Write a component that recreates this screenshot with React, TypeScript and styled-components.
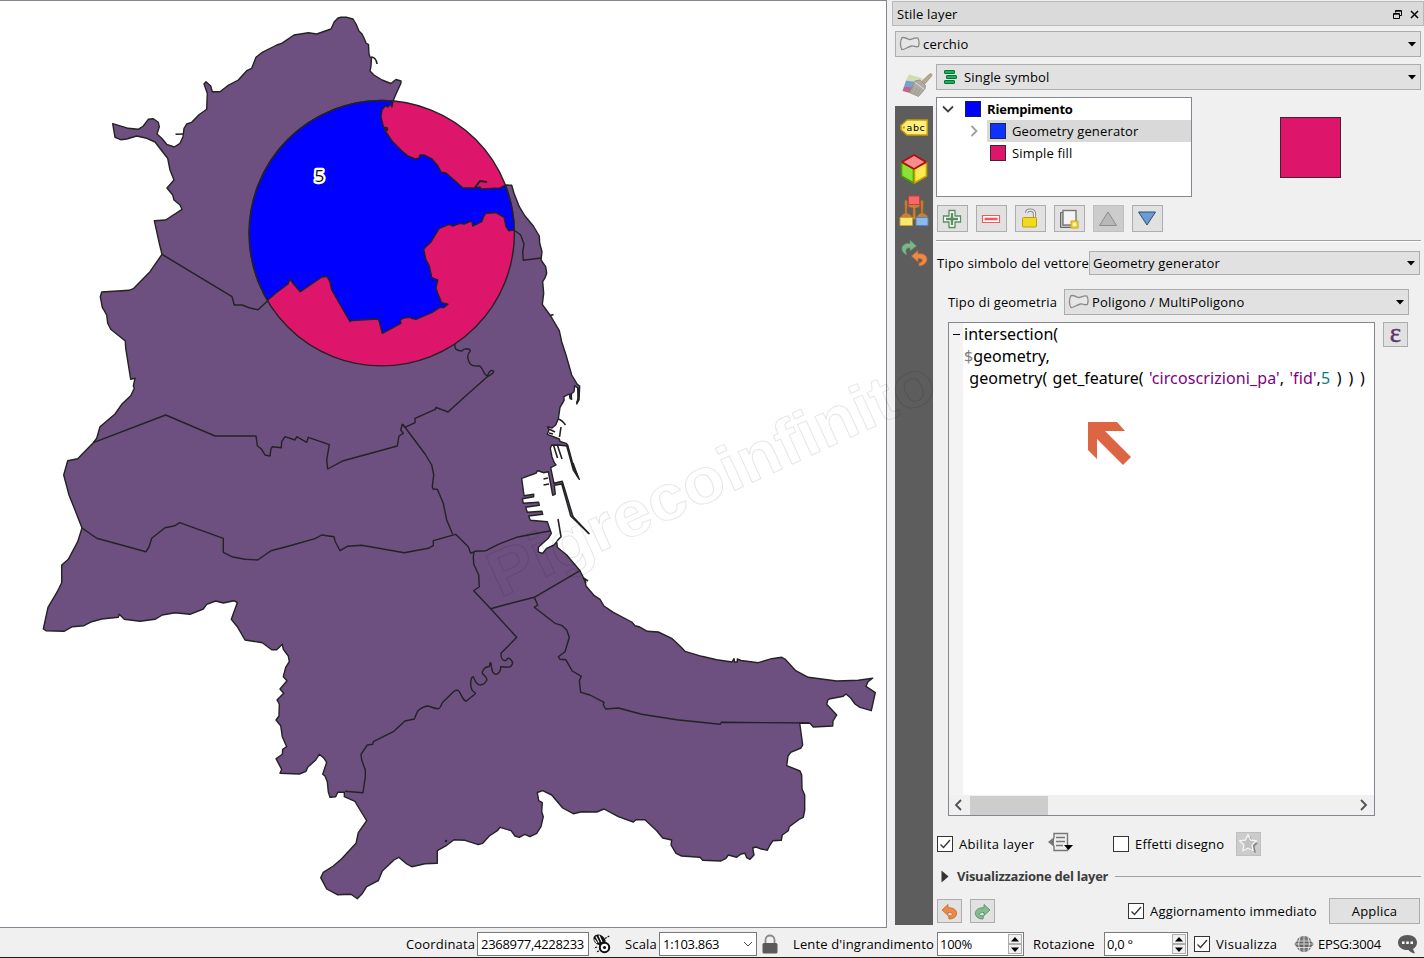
import React from 'react';
import styled, { createGlobalStyle, css } from 'styled-components';

const GlobalStyle = createGlobalStyle`
  *, *::before, *::after { box-sizing: border-box; }
  body { margin: 0; background: #f0f0f0; }
`;

const Window = styled.div`
  width: 1424px;
  height: 958px;
  overflow: hidden;
  position: relative;
  display: flex;
  flex-direction: column;
  background: #f0f0f0;
  border-bottom: 1px solid #1c1c1c;
  color: #000;
  font: 13px/18px 'Open Sans', 'Noto Sans', sans-serif;
  letter-spacing: 0.18px;
  white-space: nowrap;
`;
const Main = styled.div`
  display: flex;
  height: 928px;
  flex: none;
`;
const Canvas = styled.div`
  width: 887px;
  height: 928px;
  flex: none;
  background: #fff;
  border: 1px solid #828790;
  border-left: 0;
  overflow: hidden;
  svg { display: block; margin-top: -1px; }
`;
const Watermark = styled.svg`
  position: absolute;
  left: 0;
  top: 0;
  pointer-events: none;
`;

const Dock = styled.section`
  width: 532px;
  margin: 1px 0 0 5px;
  display: flex;
  flex-direction: column;
`;
const DockTitle = styled.header`
  height: 25px;
  border: 1px solid #b9b9b9;
  background: #dadada;
  display: flex;
  align-items: center;
  padding: 1px 4px 0 4px;
  gap: 8px;
  span { flex: 1; }
`;
const DockBody = styled.div`
  display: flex;
  margin-top: 7px;
  padding-left: 3px;
`;
const Tabs = styled.nav`
  width: 38px;
  flex: none;
  height: 861px;
  display: flex;
  flex-direction: column;
`;
const ActiveTab = styled.div`
  height: 42px;
  display: flex;
  justify-content: center;
  align-items: center;
  padding-left: 6px;
`;
const TabStrip = styled.div`
  height: 819px;
  background: #5d5d5d;
  display: flex;
  flex-direction: column;
  align-items: center;
  padding-top: 7px;
  gap: 11px;
  svg { flex: none; }
`;
const Content = styled.div`
  width: 488px;
  margin-left: 3px;
  display: flex;
  flex-direction: column;
`;
const Combo = styled.div<{ w: number; h?: number; gap?: number }>`
  width: ${p => p.w}px;
  height: ${p => p.h ?? 26}px;
  flex: none;
  border: 1px solid #adadad;
  background: #e1e1e1;
  display: flex;
  align-items: center;
  gap: ${p => p.gap ?? 3}px;
  padding: 0 4px 0 3px;
  svg { flex: none; }
  span { flex: 1; }
`;
const TopCombo = styled.div`
  margin: 5px 0 0 3px;
`;
const SymbolRow = styled.div`
  display: flex;
  margin-top: 7px;
`;
const Tree = styled.div`
  width: 256px;
  height: 100px;
  border: 1px solid #828790;
  background: #fff;
`;
const TreeRow = styled.div<{ root?: boolean }>`
  height: 22px;
  display: flex;
  align-items: center;
  font-weight: ${p => (p.root ? 700 : 400)};
  letter-spacing: ${p => (p.root ? -0.2 : 0.16)}px;
  padding-left: ${p => (p.root ? 5 : 31)}px;
  svg { width: 12px; flex: none; }
`;
const TreeItem = styled.div<{ selected?: boolean; root?: boolean }>`
  flex: 1;
  height: 22px;
  display: flex;
  align-items: center;
  gap: 6px;
  margin-left: ${p => (p.root ? 8 : 7)}px;
  padding-left: 3px;
  background: ${p => (p.selected ? '#d9d9d9' : 'transparent')};
`;
const Swatch = styled.i<{ c: string; size?: number }>`
  width: ${p => p.size ?? 16}px;
  height: ${p => p.size ?? 16}px;
  background: ${p => p.c};
  border: 1px solid rgba(35, 35, 35, 0.8);
`;
const Preview = styled.div`
  margin: 20px 0 0 88px;
`;
const Tools = styled.div<{ gap: number; mt: number }>`
  display: flex;
  gap: ${p => p.gap}px;
  margin: ${p => p.mt}px 0 0 1px;
`;
const buttonBase = css`
  border: 1px solid #adadad;
  background: #e1e1e1;
  display: flex;
  align-items: center;
  justify-content: center;
  padding: 0;
  font: inherit;
  letter-spacing: inherit;
  color: inherit;
  flex: none;
`;
const ToolButton = styled.button<{ w?: number; h?: number; off?: boolean }>`
  ${buttonBase}
  width: ${p => p.w ?? 31}px;
  height: ${p => p.h ?? 27}px;
  padding-right: 1px;
  ${p => p.off && 'background:#ccc;border-color:#bfbfbf;'}
`;
const Rule = styled.div`
  height: 2px;
  margin: 8px 3px 0 0;
  background: #a0a0a0;
  border-bottom: 1px solid #fff;
`;
const Field = styled.div<{ mt: number; ml: number }>`
  display: flex;
  align-items: center;
  margin: ${p => p.mt}px 0 0 ${p => p.ml}px;
`;
const Caption = styled.label<{ w: number; ls?: number }>`
  width: ${p => p.w}px;
  flex: none;
  letter-spacing: ${p => p.ls ?? 0.18}px;
`;
const EditorRow = styled.div`
  display: flex;
  align-items: flex-start;
  gap: 8px;
  margin: 7px 0 0 12px;
`;
const Editor = styled.div`
  width: 427px;
  height: 494px;
  border: 1px solid #828790;
  background: #fff;
  display: flex;
  flex-direction: column;
`;
const CodeArea = styled.div`
  flex: 1;
  display: flex;
`;
const Gutter = styled.div`
  width: 14px;
  background: #f3f3f3;
  padding: 11px 0 0 4px;
  &::before { content: ''; display: block; width: 7px; height: 1px; background: #000; }
`;
const Code = styled.pre`
  margin: 0;
  padding: 0 0 0 1px;
  font: 16px/22px 'Noto Sans', sans-serif;
  letter-spacing: 0;
  word-spacing: 1.2px;
`;
const Tok = styled.span<{ c: string; ls?: number; ws?: number }>`
  color: ${p => p.c};
  letter-spacing: ${p => p.ls ?? 0}px;
  word-spacing: ${p => p.ws ?? 1.2}px;
`;
const Scroll = styled.div`
  height: 20px;
  background: #f0f0f0;
  display: flex;
  align-items: center;
  justify-content: space-between;
  padding: 0 6px 0 5px;
`;
const Thumb = styled.div`
  width: 78px;
  height: 19px;
  background: #cdcdcd;
  margin: 0 auto 0 6px;
`;
const EpsButton = styled.button`
  ${buttonBase}
  width: 25px;
  height: 25px;
  padding-bottom: 3px;
  font: 27px/20px 'Liberation Serif', serif;
  -webkit-text-stroke: 0.4px #5c3566;
  color: #5c3566;
`;
const OptionRow = styled.div`
  display: flex;
  align-items: center;
  height: 25px;
  margin: 15px 0 0 1px;
`;
const Check = styled.span<{ mr?: number }>`
  width: 16px;
  height: 16px;
  flex: none;
  border: 1px solid #333;
  background: #fff;
  margin-right: ${p => p.mr ?? 6}px;
  svg { display: block; }
`;
const Group = styled.div`
  display: flex;
  align-items: center;
  height: 20px;
  margin: 10px 3px 0 5px;
  font-weight: 700;
  letter-spacing: -0.26px;
  color: #3c3c3c;
  svg { margin-right: 8px; }
  &::after { content: ''; flex: 1; height: 1px; background: #a0a0a0; margin-left: 7px; }
`;
const Footer = styled.div`
  display: flex;
  align-items: center;
  height: 26px;
  margin: 12px 0 0 1px;
`;
const Apply = styled.button`
  ${buttonBase}
  width: 91px;
  height: 26px;
`;

const StatusBar = styled.footer`
  height: 29px;
  display: flex;
  align-items: center;
  padding: 3px 0 0 406px;
`;
const Input = styled.div<{ w: number; mr: number; spin?: boolean }>`
  width: ${p => p.w}px;
  height: 24px;
  flex: none;
  border: 1px solid #7a7a7a;
  background: #fff;
  display: flex;
  align-items: center;
  justify-content: space-between;
  letter-spacing: ${p => (p.spin ? -0.3 : -0.3)}px;
  padding: ${p => (p.spin ? '0 1px 0 2px' : '0 3px')};
  margin-right: ${p => p.mr}px;
`;
const Spin = styled.div`
  display: flex;
  flex-direction: column;
  width: 14px;
  i {
    height: 10px;
    border: 1px solid #adadad;
    background: #f0f0f0;
    display: flex;
    align-items: center;
    justify-content: center;
  }
`;
const StatusIcon = styled.span<{ w: number }>`
  width: ${p => p.w}px;
  flex: none;
  display: flex;
`;

const LAND =
  'M338,18L341,17.3 347,17.3 353,19 356,24 359,31 362,34 364,38 366,43 368.5,44.5 369,54 370,57 371.5,58 371,66 370,71 374,75 382,80 391,83.5 394,81 396,79.5 401,81 401,83 396,94 393,101 392,107 391,104 388,107 385,106 382,110 381,117 383,125 386,132 392,141 402,151 408,156 415,159 419,158 420,155 424,155 432,159 438,166 441,172 446,173 453,179 463,188 475,188 480,187 481,189 500,188 506.7,185 511.7,185.3 514,193.3 519.3,206.7 525,216 533.3,226 539.3,236 539.7,243.3 542,251.7 541,260 545.7,266.7 546.7,273.3 545,278 542.7,281.7 543.7,293.3 542.3,304.3 550.7,316 559.3,330.7 561.7,341.7 566,355 571.7,375 577.3,384.3 579.7,386 579,400 576.7,404 578,398 577.7,388 574.7,385.7 574,391.7 571,394 571.7,399.3 570,398.3 569.3,394 564,396.7 564,400.7 560,407.3 558.3,419 555.7,425 552,428 547.7,426.7 549,430 547.3,434.3 559.3,439 560,441.3 566,443.3 567.7,445 573.3,465.7 579.3,479.3 573.3,470 566.7,446 560.7,445.3 551.7,445 550.3,448.3 552,457 554.3,462.7 556,465 550.7,467.7 554,483.3 562.3,481.3 572.3,514.3 573.3,517.3 589,533.7 570.7,516 561.7,484 554.3,485.3 555.3,494 552.7,495.3 548.3,471.7 543.3,472.7 539,471 537.3,470.7 536.3,473 521.7,478.3 524,495.7 533.7,494.3 533.7,496.7 522.3,498.7 523.3,503.3 538.7,502.3 539.3,505.3 525.7,507.3 527.3,512.3 542,511.3 542.7,514.3 528.7,516 530.3,520.3 547.3,521.7 551.3,533.3 548.3,538.3 538.3,547.3 538.3,552 542.7,553.3 546.7,548.3 554,545 556.7,541.7 557.3,547.3 566.7,555 580,570.7 585,580.7 586,586 594.3,595.7 600,599.3 604,606 613.3,612.3 631.7,622 635,625.7 639,626.7 647.3,631.3 658.3,632 671.7,638.3 680.7,646.7 685,651.3 701.7,656.3 716.7,659.7 732,662 734,658.7 734.5,662 737.3,662 737.3,659 741,660.5 758.3,662.7 771.7,658.7 781.7,657.3 785,659 795.7,670.7 808.3,677.3 836.7,681 858.3,680.3 872.7,678.3 868,681.7 866,686.3 875.3,692.7 871.3,710.7 860,707.3 855,704 850.7,698 846,694 843.3,696.3 829,699 827.7,700.3 826.7,704.3 836.7,715 833,721 832.7,726 813.3,727 810,723.3 799.7,723 802.7,745 801,748 790.7,752.3 788,756 786.7,765.7 800,771 801.7,775 802,789 804.7,795 804.7,810 803.3,817.3 799,819.5 789.3,826.7 788.3,830.7 782.3,835 781.3,840.3 773,840.7 770,845 767.3,850.3 760,848.7 756,847 752.7,848 754,855 750,859.3 746.7,857.7 745,853.3 741,854 736.7,857.3 728.3,855 726,858.3 721,861 702.7,860.3 700,857.3 681.7,856 676,853.3 671,845 671.7,840 662.7,838 656.7,830.7 645,819.7 636,819.7 633.3,822 618.3,816.7 604,809 596.7,812 581.7,811.7 573.3,813.7 562.7,808 551.7,795 542.7,790.7 537.3,792.5 538.7,800.7 542.3,802.7 541.7,811.7 543.3,816.7 541,826.7 536.7,833.3 530,836.7 524.7,834.3 519.3,837.3 515,836 511,830.7 500,827.3 497.3,830.7 489.3,836 482.7,843.3 478.3,844.7 465,840.3 454,839.7 446.7,845.3 437.3,850.7 437.3,863.3 425,863.7 411.7,866.7 406.7,864 398.7,857.3 394,860 382.3,871 378.3,880.7 366.7,886.7 361.7,894.3 357.3,898.7 351,894.3 337.3,894.7 326.7,889 320.7,877.7 323.3,872.3 333.3,866 341.7,858.7 356,843.3 358.3,832.7 366.7,820.7 360.7,811 355,801.3 344.3,796.7 344.3,792.3 337.7,792.3 335.7,796.7 330,797.3 328.3,791.7 327.3,781.7 325,776 322.7,774.3 326.7,762.3 324,758.3 319.3,754.3 315.7,760 307.7,767.3 306,771.3 299.3,774 280,773.3 281.7,769.3 276,758.7 282.3,754.3 282.7,749.3 286.7,746.7 282.3,736.7 280.7,725.7 276,720 279,716 279.3,704 277,700 283.7,693.3 280,689 287,680.7 283.3,676.7 285.7,667.3 289.3,661.7 288.3,656 283.3,649.3 282.3,644.3 276.7,649.7 271.7,649.7 262.3,642.7 245,640 237.3,626.7 231.3,619.3 237.3,602.7 234,600.7 223.3,603 215.7,601 206.7,604.3 203.3,609 190,614.3 175,612.7 162.3,615 155,619.3 140,621.3 124.3,619.3 119.3,614.3 118.3,617.3 101.7,619 91.7,621.7 84,625.7 72.3,626.7 64,631.3 46,630.7 43.3,629 48,607.3 57.3,591.7 61.7,582.7 61.7,565 68.3,559.3 77.7,541.7 82,528 75,510 69,495 63.7,475 67.7,460.7 77.7,458.7 93.3,442.7 96.7,438.3 100,426.7 115,414 121.7,404.3 130.7,395.7 134.3,388.3 133.3,386 135,378.3 130.7,379.3 125.7,348.3 125.3,341 110.7,329.3 107.7,323.3 106.7,315 102.3,307.3 100.3,296.7 101.7,292 129,290.3 133.3,288.7 150,271.7 162,254.3 159.3,243.3 154.3,220.7 165.7,220 182,209.3 180,205 174,200 172.7,195 167,188 174,180 170,170 167.7,158.3 163.3,152.7 155,142 146.7,138.3 136.7,136 126.7,139 120.7,139.7 115,137.3 112.7,123.7 128.3,128.3 138.3,129.3 143.3,126 148.3,119.3 153.3,118.7 158.3,122.3 159.3,126.7 157,134 161.7,138.3 166.7,144.3 174.3,147 180,143.3 183,136.7 184,128.3 186.7,124 191.7,122.3 199,114.7 206.7,109.3 207.3,93.3 204,84 206,81.7 210.7,86 212.3,91.7 220,91.7 227.7,85.7 238.3,80 246.7,70.7 251.7,68.3 256,57.3 261.7,52.7 276.7,45 281.7,43.3 294,35 308.3,32.7 316.7,34 331,29 334.3,21.7Z';

const BORDERS = [
  'M162,254.3L232,296.7 234.3,305 242,305 250,308 258,309.7 267.5,301',
  'M515,230.7L520.7,235 524,244 522.7,251.7 523.3,260.3 541.3,258',
  'M455,344C454,349 457,351 461.7,351 464,348 470,348 470.3,351 467,354 467,357 469,361.7 470,365 472,366 480,366 483,368 483,374 487.3,376 489,371 492,369 493.7,371.5 493.500,374 490,374.500 487,377L466.7,395 448,412 436,407.3 435.3,409.3 415,418.3 415,422.7 405,427.3 402.3,424.3 400.7,430 403.3,433.3 399,436 397.3,446 343.3,460.7 327.7,469 326.7,460 329.3,444.7 308.3,437.3 306.7,442.3 296.7,436.7 295,440 285,436.7 281.7,441.7 281.3,447.7 272.3,446.7 271,449 270,456 265,455 261.7,449.3 257.3,445.7 256,436 215,436 165.7,415 93.3,442.7',
  'M403,424.5L425,454 431.7,465 433.7,475 432.3,486.7 433,489 437.3,489.3 443.3,503.3 446.7,520 452.7,534.3',
  'M82,528L96.7,538.3 146,551.7 149,547 151.7,538.3 165,527.7 175,525.7 179.7,522.7 223.3,538.3 223.3,552.3 231.7,556.7 245,559.3 257.7,560 271,550.7 291.7,545.3 315,538.7 321.7,535 334,536.7 335,541 340,550.7 347.3,546.3 361.7,545.3 404.3,552.7 428.3,548.3 433.3,545.7 433.3,540.7 455.7,534.3 468.3,546.7 470.7,553.3 475,551.3 486,550.7 498.3,544.3 516.7,537.3 533.3,534 550.7,530.7',
  'M474,551.5L473.3,556.7 473.7,564 478.7,575 479.3,586.7 473.7,590.7 490.7,608.7 516.7,637.3 501,653.3C501,660 503,660.500 505,660.7 507,660.500 507,657.500 509.3,658.3 512,660 513,663 512.3,664 511,668 508,667.500 500.7,666.7 501,670 499,674 496,674.300 491,674 492,667 490.7,662.7 489.3,662.500 490,666 489.3,666.500 484,666.500 482,672 482.3,673.3 485,676 487,678 487,680 484,685 481,685.500 478.500,684.700 474,682 474.500,678 473.3,676.7 470,677 470,688 472.7,691 475.500,692.500 476,693.500 474.500,694.500L466,701.3C461,699 460.500,690 457.500,690.300 456,690 455,690.500 454,691.3L442.3,702.7C441,706 440,708.700 438.3,708.7 433,708.700 431,706 426.7,706 421,708 417,711 416.7,713.3L414.3,719 405,721 393.3,731.7 373.3,741.7 372.7,744.3 367.3,745 361,754.3 361.7,760 365.3,770 365.3,777 363,792.7 345,791.3',
  'M490.7,608.7L503.3,605.3 534.3,597.3 580,570.7',
  'M534.3,597.3L537.7,605 534.3,607.3 555,623.3 561.7,625.3 566.7,630 569.3,637.3 565,651.7 558.3,656.7 560,659.3 565.7,659.7 572.3,671 581.3,676.3 579.3,680.7 580.7,692.3 590,695 604,702.3 603.3,705 605.7,709 618.3,708 641.7,714.3 676.7,719.7 720,724.3 721.3,722.3 809,723',
];

const JETTIES =
  'M371,57Q376,57 377,64M175.5,134.3L183,134M586,583L583.5,578 588,581M558,519L561,536.7 557,541M573,517L589,533.7M558.3,419Q562,420 565.5,425M561,427L559.5,437M549,429L555,432M549,433L553,434M553.5,445L557.5,458M557,444L562,459M543.5,485L549,484M543.5,479L548,478M578.5,388L578.5,399 576.7,403M571.5,394L571,399M550.5,315.5L553.5,314.5M573,463L578,477';

const BLUE =
  'M267.5,300.3L276,293 288,284 290,279 293.5,284 300.3,291.7 322,277 327,276.5 330,282 331.7,290 350,321.7 352,320.5 377.3,319 379,320.5 382.3,333.3 401,323.3 400.3,320 404,318 410,317.3 412,318.5 416,319.3 431.7,312.7 440,307.3 444,307.5 448,304.3 445,303.5 441.7,302.7 437.7,293.3 436,288 437.7,280 435,279 431.7,277.3 429.3,266 425.7,259 423.7,249 430.7,242.3 439.3,228.3 449.3,224.3 452.7,226 460,223.3 464,224 470,221.5 472,221.5 472.7,226 481.7,221.7 484,216 486,213.3 496,212.7 504,217.3 506,226.7 508.7,230.7 514.4,230A132.7,132.7 0 0 0 505.3,185.5L500,188 481,189 480,187 475,188 463,188 453,179 446,173 441,172 438,166 432,159 424,155 420,155 419,158 415,159 408,156 402,151 392,141 386,132 383,125 381,117 382,110 385,106 388,107 391,104 392,107 393,101A132.7,132.7 0 0 0 267.5,300.3Z';

function MapDrawing() {
  return (
    <svg width="886" height="928" viewBox="0 0 886 928" stroke="#232323" strokeWidth="1.4" strokeLinejoin="round" fill="none">
      <path d={LAND} fill="#6d4f80" />
      {BORDERS.map((d, i) => (
        <path key={i} d={d} />
      ))}
      <path d={JETTIES} strokeWidth="1.6" />
      <circle cx="446" cy="841" r="0.6" />
      <circle cx="381.7" cy="233.2" r="132.7" fill="#de166b" />
      <path d={BLUE} fill="#0000ff" />
      <path d="M475,187.500L480,181 487,182" strokeWidth="2" />
      <circle cx="386" cy="129" r="1.600" fill="#232323" />
      <text x="319.500" y="182" textAnchor="middle" fontFamily="'Open Sans'" fontSize="17" fill="#111" stroke="#fff" strokeWidth="4.500" paintOrder="stroke">
        5
      </text>
    </svg>
  );
}

const Drop = () => (
  <svg width="8" height="5" viewBox="0 0 8 5">
    <path d="M0 0H8L4 4.5Z" fill="#000" />
  </svg>
);
const PolygonIcon = () => (
  <svg width="21" height="16" viewBox="0 0 21 16">
    <path d="M3 1.600C7 .8 9 4.200 12 3.400 14 2.400 17 1.200 19 2.200 20.400 5 20.200 8 19.400 10.500 17 11.500 15 9.700 12.500 10 8.500 10.800 6 13.600 3 13.600 1 11 .9 5 3 1.600Z" fill="#e6e6e6" stroke="#8a8a8a" strokeWidth="1.300" />
  </svg>
);
const Mark = () => (
  <svg width="14" height="14" viewBox="0 0 14 14">
    <path d="M2.500 7.500L5.500 10.500L12 3" fill="none" stroke="#333" strokeWidth="1.300" />
  </svg>
);
const Bend = ({ c, e, flip }: { c: string; e: string; flip?: boolean }) => (
  <svg width="17" height="17" viewBox="0 0 17 17">
    <path
      transform={flip ? 'matrix(-1 0 0 1 17 0)' : undefined}
      d="M1 7L7 1.500V4.800C12.500 4.500 16 7 15.600 11 15 14.500 12 16 8 16L7.500 12.800C10.500 13 11.800 12 11.300 10.800 10.800 9.600 9.500 9.400 7 9.500V12.500Z"
      fill={c}
      stroke={e}
      strokeWidth="0.800"
    />
  </svg>
);

const BrushIcon = () => (
  <svg width="32" height="28" viewBox="0 0 32 28">
    <path d="M8 3.500L22 7.500L19 12L5 9.500Z" fill="#d2dcae" />
    <path d="M5 9.500L19 11.500L15 18L3 15.500Z" fill="#76a2cf" />
    <path d="M3 15.500L16 17L13 23L1.500 20Z" fill="#bf6588" />
    <path d="M20.500 10.500L28 3.500Q30.500 1.500 31 3.500Q31.300 5 29.500 6.500L23.500 13.500Z" fill="#b3a98e" stroke="#938b74" strokeWidth=".6" />
    <path d="M14 10L19 9L24.500 14.500L24 18L17.500 25.500L8.500 21.500Z" fill="#b0aca3" stroke="#8f8b82" strokeWidth=".8" />
    <path d="M13.500 11L23.500 18.500" stroke="#dcd9d0" strokeWidth="1" />
    <path d="M13 15L10.500 21M16 16.500L13 23M19 18L15.500 24.500" stroke="#96928a" strokeWidth=".7" />
  </svg>
);
const AbcIcon = () => (
  <svg width="30" height="30" viewBox="0 0 30 30">
    <path d="M8 7H28.300V22H8L2 16.500V12.500Z" fill="#fff07c" stroke="#c89b07" strokeWidth="1.600" strokeLinejoin="round" />
    <circle cx="4.800" cy="14.500" r="1.200" fill="#c89b07" />
    <text x="7.500" y="18" fontFamily="'DejaVu Sans'" fontSize="9.500" fill="#000" textLength="18.500">abc</text>
  </svg>
);
const CubeIcon = () => (
  <svg width="30" height="30" viewBox="0 0 30 30" strokeLinejoin="round" strokeWidth="1.600">
    <path d="M2.500 8.500L14.500 14.500V29L2.500 22Z" fill="#8ae234" stroke="#4e9a06" />
    <path d="M27.500 8.500L15.500 14.500V29L27.500 22Z" fill="#fce94f" stroke="#c4a000" />
    <path d="M15 1L27 8L15 15L3 8Z" fill="#f58d8d" stroke="#b50a12" />
  </svg>
);
const BrushesIcon = () => (
  <svg width="30" height="32" viewBox="0 0 30 32">
    <path d="M5.500 6Q7 4 8.500 6L8 18Q12.500 19 13 22.500H1.500Q2 19 6 18Z" fill="#c4813a" stroke="#8f5a1e" strokeWidth=".6" />
    <path d="M21.500 6Q23 4 24.500 6L24 18Q28.500 19 29 22.500H17.500Q18 19 22 18Z" fill="#c4813a" stroke="#8f5a1e" strokeWidth=".6" />
    <path d="M9 9.500H21Q21 13 16.500 13L17 24Q15 26 13.500 24L14 13Q9 13 9 9.500Z" fill="#c4813a" stroke="#8f5a1e" strokeWidth=".6" />
    <path d="M9.500 1H20.500V9.500H9.500Z" fill="#f26a6a" stroke="#cc3a3a" />
    <path d="M1 22.500H13.500V30.500H1Z" fill="#fbe577" stroke="#c9a227" />
    <path d="M17 22.500H29V30.500H17Z" fill="#8db9ea" stroke="#5484bd" />
  </svg>
);
const HistoryIcon = () => (
  <svg width="30" height="30" viewBox="0 0 30 30">
    <path d="M8 17C2 15 1 8 6 6 8 5 10 5 11 5.500V2L17.500 8L11 13V10C7 9.500 6 12 8 17Z" fill="#7db58b" stroke="#4f8e60" strokeWidth=".7" />
    <path d="M20 28C29 27 30 19 25 16.500 23 15.500 21 15.500 19 16V12.500L12.500 18L19 24V20.500C24 20 25 24 20 25Z" fill="#ea8a46" stroke="#c9642a" strokeWidth=".7" />
  </svg>
);

function Toolbar() {
  return (
    <Tools gap={8} mt={8}>
      <ToolButton>
        <svg width="20" height="20" viewBox="0 0 20 20">
          <path d="M7 1.500H13V7H18.500V13H13V18.500H7V13H1.500V7H7Z" fill="#fff" stroke="#5a8f62" strokeWidth="1.300" />
          <path d="M10 4V16M4 10H16" stroke="#5a8f62" strokeWidth="2.400" />
        </svg>
      </ToolButton>
      <ToolButton>
        <svg width="20" height="20" viewBox="0 0 20 20">
          <path d="M1.500 6.500H18.500V13.500H1.500Z" fill="#fff" stroke="#ee5a5c" strokeWidth="1.200" />
          <path d="M3.500 10H16.500" stroke="#ee5a5c" strokeWidth="2.600" />
        </svg>
      </ToolButton>
      <ToolButton>
        <svg width="18" height="21" viewBox="0 0 18 21">
          <path d="M5.500 5C6 1.200 13.500 1 13.500 6V10" fill="none" stroke="#888" strokeWidth="3.200" />
          <path d="M5.500 5C6 1.200 13.500 1 13.500 6V10" fill="none" stroke="#eee" strokeWidth="1.300" />
          <rect x="1.500" y="9.500" width="14" height="9.500" rx="1" fill="#f0d91e" stroke="#bfa000" />
        </svg>
      </ToolButton>
      <ToolButton>
        <svg width="20" height="20" viewBox="0 0 20 20">
          <path d="M4 3.500H1.500V18.500H14V16" fill="#bbb" stroke="#666" />
          <rect x="4" y="1.500" width="13" height="14.500" fill="#f4f4f4" stroke="#777" strokeWidth="1.400" />
          <path d="M12 12H19V19H12Z" fill="#f2d544" stroke="#cda70f" />
          <circle cx="15.500" cy="15.500" r="1.800" fill="#fff8c8" />
        </svg>
      </ToolButton>
      <ToolButton off>
        <svg width="20" height="18" viewBox="0 0 20 18">
          <path d="M10 2L18.500 15.500H1.500Z" fill="#b8b8b8" stroke="#8c8c8c" />
        </svg>
      </ToolButton>
      <ToolButton>
        <svg width="20" height="18" viewBox="0 0 20 18">
          <path d="M1.500 2H18.500L10 15Z" fill="#6c9bd0" stroke="#2c4f78" />
        </svg>
      </ToolButton>
    </Tools>
  );
}

function StylePanel() {
  return (
    <Dock>
      <DockTitle>
        <span>Stile layer</span>
        <svg width="9" height="9" viewBox="0 0 9 9" fill="none" stroke="#000">
          <path d="M2.500 2.500V.5H8.500V5.500H6.500M2.500 1.200H8.500" />
          <path d="M.5 3.500H6.500V8.500H.5ZM.5 4.200H6.500" />
        </svg>
        <svg width="9" height="9" viewBox="0 0 9 9">
          <path d="M1 1L8 8M8 1L1 8" stroke="#000" strokeWidth="1.500" />
        </svg>
      </DockTitle>
      <TopCombo>
        <Combo w={526}>
          <PolygonIcon />
          <span>cerchio</span>
          <Drop />
        </Combo>
      </TopCombo>
      <DockBody>
        <Tabs>
          <ActiveTab><BrushIcon /></ActiveTab>
          <TabStrip>
            <AbcIcon />
            <CubeIcon />
            <BrushesIcon />
            <HistoryIcon />
          </TabStrip>
        </Tabs>
        <Content>
          <Combo w={485} gap={5}>
            <svg width="19" height="16" viewBox="0 0 19 16" fill="#17b05e" stroke="#0a7038">
              <rect x="4.500" y="1.500" width="10" height="3" rx=".5" />
              <rect x="6.500" y="6.500" width="10" height="3" rx=".5" />
              <rect x="4.500" y="11.500" width="10" height="3" rx=".5" />
            </svg>
            <span>Single symbol</span>
            <Drop />
          </Combo>
          <SymbolRow>
            <Tree>
              <TreeRow root>
                <svg height="12" viewBox="0 0 12 12"><path d="M1 3.500L6 8.500L11 3.500" fill="none" stroke="#404040" strokeWidth="1.800" /></svg>
                <TreeItem root><Swatch c="#0000ff" />Riempimento</TreeItem>
              </TreeRow>
              <TreeRow>
                <svg height="12" viewBox="0 0 12 12"><path d="M3.500 1L8.500 6L3.500 11" fill="none" stroke="#a0a0a0" strokeWidth="1.800" /></svg>
                <TreeItem selected><Swatch c="#0f33ff" />Geometry generator</TreeItem>
              </TreeRow>
              <TreeRow>
                <svg height="12" viewBox="0 0 12 12" />
                <TreeItem><Swatch c="#de166b" />Simple fill</TreeItem>
              </TreeRow>
            </Tree>
            <Preview><Swatch as="div" c="#de166b" size={61} /></Preview>
          </SymbolRow>
          <Toolbar />
          <Rule />
          <Field mt={9} ml={1}>
            <Caption w={152} ls={0.22}>Tipo simbolo del vettore</Caption>
            <Combo w={331} h={24}><span>Geometry generator</span><Drop /></Combo>
          </Field>
          <Field mt={14} ml={12}>
            <Caption w={116}>Tipo di geometria</Caption>
            <Combo w={345}><PolygonIcon /><span>Poligono / MultiPoligono</span><Drop /></Combo>
          </Field>
          <EditorRow>
            <Editor>
              <CodeArea>
                <Gutter />
                <Code>
                  {'intersection(\n'}
                  <Tok c="#808080">$</Tok>
                  {'geometry,\n geometry( get_feature( '}
                  <Tok c="#7f007f" ls={0.1}>'circoscrizioni_pa'</Tok>
                  {', '}
                  <Tok c="#7f007f" ls={0.1}>'fid'</Tok>,<Tok c="#007f7f">5</Tok>
                  <Tok c="#000" ws={2.6}>{' ) ) )'}</Tok>
                </Code>
              </CodeArea>
              <Scroll>
                <svg width="10" height="12" viewBox="0 0 10 12"><path d="M7 1L2 6L7 11" fill="none" stroke="#505050" strokeWidth="1.800" /></svg>
                <Thumb />
                <svg width="10" height="12" viewBox="0 0 10 12"><path d="M3 1L8 6L3 11" fill="none" stroke="#505050" strokeWidth="1.800" /></svg>
              </Scroll>
            </Editor>
            <EpsButton>ε</EpsButton>
          </EditorRow>
          <OptionRow>
            <Check><Mark /></Check>
            <Caption w={89} ls={0.35}>Abilita layer</Caption>
            <Caption w={65}>
              <svg width="26" height="20" viewBox="0 0 26 20">
                <path d="M6 1.500H19.500V18.500H6V14L1 10L6 6Z" fill="#eee" stroke="#777" strokeWidth="1.400" />
                <path d="M6 6V14L1 10Z" fill="#777" />
                <path d="M8 5.500H17M8 9.500H17M8 13.500H15" stroke="#777" strokeWidth="1.500" />
                <path d="M16 13H25L20.500 18Z" fill="#000" />
              </svg>
            </Caption>
            <Check />
            <Caption w={101} ls={0.16}>Effetti disegno</Caption>
            <ToolButton off w={25} h={24}>
              <svg width="21" height="21" viewBox="0 0 21 21" strokeLinejoin="round">
                <path d="M12 3L14.500 8.500L20 10L16.500 13.500L18 20L12 17Z" fill="#888" />
                <path d="M10 1.500L12.500 7L18.500 7.800L14 12L15.200 18L10 15L4.800 18L6 12L1.500 7.800L7.500 7Z" fill="#c0c0c0" stroke="#f4f4f4" strokeWidth="1.300" />
              </svg>
            </ToolButton>
          </OptionRow>
          <Group>
            <svg width="8" height="13" viewBox="0 0 8 13"><path d="M.5 .5V12.500L7.500 6.500Z" fill="#333" /></svg>
            Visualizzazione del layer
          </Group>
          <Footer>
            <ToolButton w={25} h={24}><Bend c="#ea8a46" e="#c9642a" /></ToolButton>
            <Caption w={8} />
            <ToolButton w={25} h={24}><Bend c="#83bd8f" e="#4f8e60" flip /></ToolButton>
            <Caption w={133} />
            <Check><Mark /></Check>
            <Caption w={179}>Aggiornamento immediato</Caption>
            <Apply>Applica</Apply>
          </Footer>
        </Content>
      </DockBody>
    </Dock>
  );
}

const SpinArrows = () => (
  <Spin>
    <i><svg width="8" height="5" viewBox="0 0 8 5"><path d="M0 4.500L4 0L8 4.500Z" /></svg></i>
    <i><svg width="8" height="5" viewBox="0 0 8 5"><path d="M0 .5L4 5L8 .5Z" /></svg></i>
  </Spin>
);

function Status() {
  return (
    <StatusBar>
      <Caption w={71}>Coordinata</Caption>
      <Input w={112} mr={3}>2368977,4228233</Input>
      <StatusIcon w={33}>
        <svg width="20" height="20" viewBox="0 0 20 20">
          <ellipse cx="7.500" cy="6" rx="6.500" ry="5" fill="#111" transform="rotate(35 7.500 6)" />
          <path d="M4 2.500L7 8.500M7 1.500L10 8M2.500 5.500L5 9" stroke="#fff" strokeWidth="1.200" />
          <circle cx="12.500" cy="13.500" r="4.700" fill="#fff" stroke="#111" strokeWidth="2" />
          <circle cx="12.500" cy="13.500" r="1.600" fill="#111" />
          <path d="M13 4.500L18 1.500M5 13L2 14M7 17L4 18" stroke="#111" strokeWidth="1.200" strokeDasharray="2 1" />
        </svg>
      </StatusIcon>
      <Caption w={34}>Scala</Caption>
      <Input w={98} mr={5}>
        1:103.863
        <svg width="10" height="8" viewBox="0 0 10 8"><path d="M1 2L5 6L9 2" fill="none" stroke="#444" /></svg>
      </Input>
      <StatusIcon w={31}>
        <svg width="16" height="20" viewBox="0 0 16 20">
          <path d="M3.500 11V6C3.500 0 12.500 0 12.500 6V11" fill="none" stroke="#8a8a8a" strokeWidth="1.800" />
          <rect x=".5" y="9" width="15" height="10.500" rx="1.500" fill="#5a5a5a" />
        </svg>
      </StatusIcon>
      <Caption w={144} ls={0.14}>Lente d'ingrandimento</Caption>
      <Input w={87} mr={9} spin>100%<SpinArrows /></Input>
      <Caption w={71}>Rotazione</Caption>
      <Input w={84} mr={6} spin>0,0 °<SpinArrows /></Input>
      <Check><Mark /></Check>
      <Caption w={78} ls={0.3}>Visualizza</Caption>
      <StatusIcon w={24}>
        <svg width="20" height="18" viewBox="0 0 20 18">
          <circle cx="10" cy="9" r="8" fill="#777" />
          <ellipse cx="10" cy="9" rx="9.500" ry="3.600" fill="#666" />
          <path d="M10 1V17M2 6H18M1 9H19M3 12.500H17M6 2Q3 9 6 16M14 2Q17 9 14 16" stroke="#eee" strokeWidth=".8" fill="none" />
        </svg>
      </StatusIcon>
      <Caption w={79} ls={-0.2}>EPSG:3004</Caption>
      <svg width="21" height="20" viewBox="0 0 21 20">
        <path d="M10.500 1C16 1 20 4 20 8.500 20 11.500 18 14 16 15L18 19.500C15 19 13 18 11.500 16 5 16.500 1 13 1 8.500 1 4 5 1 10.500 1Z" fill="#5a5a5a" />
        <path d="M5 7.500H7.500V10H5ZM9.300 7.500H11.800V10H9.300ZM13.500 7.500H16V10H13.500Z" fill="#fff" />
      </svg>
    </StatusBar>
  );
}

export default function App() {
  return (
    <>
      <GlobalStyle />
      <Window>
        <Main>
          <Canvas><MapDrawing /></Canvas>
          <StylePanel />
        </Main>
        <Status />
        <Watermark width="1424" height="958" viewBox="0 0 1424 958">
          <path d="M1088 422H1117L1125 431H1105L1131 457L1123 465L1097 439V459L1088 450Z" fill="#dc6544" />
          <text
            transform="translate(500,598) rotate(-24.6)"
            fontFamily="'Liberation Sans'"
            fontWeight="bold"
            fontSize="64"
            textLength="484"
            lengthAdjust="spacingAndGlyphs"
            fill="none"
            stroke="#000"
            strokeOpacity="0.100"
            strokeWidth="1"
          >
            Pigrecoinfinito
          </text>
        </Watermark>
      </Window>
    </>
  );
}
